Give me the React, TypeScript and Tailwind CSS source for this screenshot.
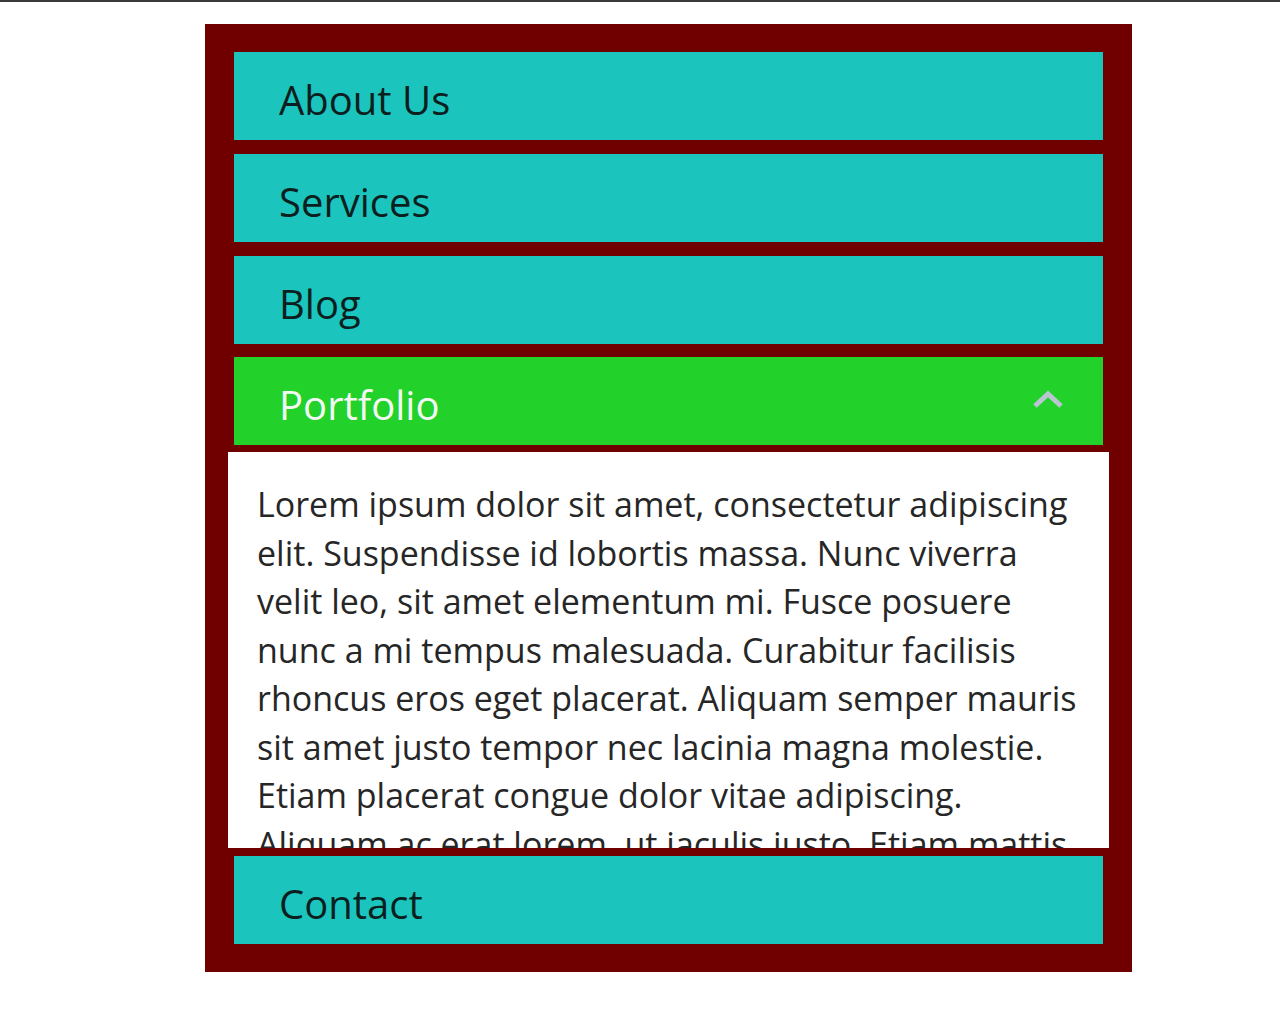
import React from "react";

const items = ["About Us", "Services", "Blog", "Portfolio", "Contact"];

export default function App() {
  return (
    <div className="min-h-[1024px] w-[1280px] bg-white border-t-2 border-[#3a3a3a]" style={{ fontFamily: '"Open Sans", sans-serif' }}>
      <div className="ml-[205px] mt-[22px] w-[927px] h-[948px] bg-[#700000] pt-[28px] px-[29px] pb-[29px] flex flex-col">
        {items.map((it) => {
          const active = it === "Portfolio";
          const gap =
            it === "Services" || it === "Blog" ? "mt-[14px]" : it === "Portfolio" ? "mt-[13px]" : "";
          return (
            <React.Fragment key={it}>
              <div
                className={`h-[88px] shrink-0 flex items-center justify-between pl-[45px] pr-[40px] ${
                  active ? "bg-[#22d22a] text-[#f4f8f4]" : "bg-[#1bc5bd] text-[#0c1f1f]"
                } ${gap}`}
              >
                <span className="text-[40px] leading-none pt-[8px]">{it}</span>
                {active && (
                  <svg width="30" height="20" viewBox="0 0 30 20" className="mb-[2px]">
                    <path d="M2 16 L15 4 L28 16" fill="none" stroke="#b9c6d2" strokeWidth="5" />
                  </svg>
                )}
              </div>
              {active && (
                <div className="mx-[-6px] mt-[7px] mb-[8px] h-[396px] shrink-0 overflow-hidden bg-white px-[29px] pt-[28px] text-[34px] leading-[48.5px] text-[#262626]">
                  Lorem ipsum dolor sit amet, consectetur adipiscing elit. Suspendisse id lobortis massa. Nunc viverra velit leo, sit amet elementum mi. Fusce posuere nunc a mi tempus malesuada. Curabitur facilisis rhoncus eros eget placerat. Aliquam semper mauris sit amet justo tempor nec lacinia magna molestie. Etiam placerat congue dolor vitae adipiscing. Aliquam ac erat lorem, ut iaculis justo. Etiam mattis dignissim gravida. Aliquam erat volutpat.
                </div>
              )}
            </React.Fragment>
          );
        })}
      </div>
    </div>
  );
}
